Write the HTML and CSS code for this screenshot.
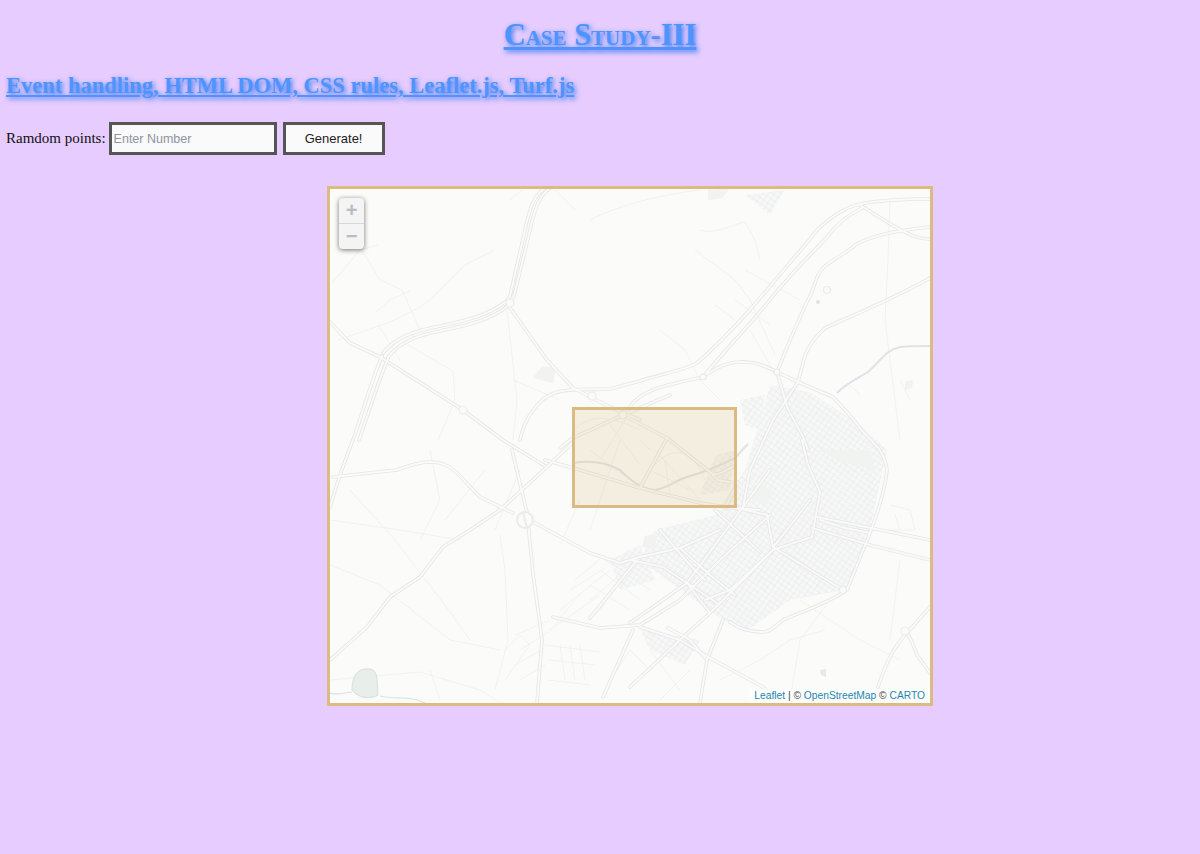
FILE: index.html
```html
<!DOCTYPE html>
<html lang="en">
<head>
<meta charset="utf-8">
<title>Case Study-III</title>
<link rel="stylesheet" href="styles.css">
</head>
<body>
<h1 class="title">Case Study-III</h1>
<h2 class="subtitle">Event handling, HTML DOM, CSS rules, Leaflet.js, Turf.js</h2>
<div class="controls">
  <label class="label" for="num">Ramdom points:</label>
  <input class="num-input" id="num" type="text" placeholder="Enter Number">
  <button class="gen-btn" type="button">Generate!</button>
</div>
<div class="map">
  <svg class="tiles" viewBox="330 189 600 514" width="600" height="514" aria-hidden="true">
    <defs>
      <pattern id="blocks" width="5" height="5" patternUnits="userSpaceOnUse" patternTransform="rotate(35)">
        <rect width="5" height="5" fill="#f6f7f6"/>
        <path d="M0 0H5M0 0V5" stroke="#e6e8e8" stroke-width="1"/>
      </pattern>
      <g id="roads">
        <path d="M545 188C532 197 529 212 525 230L510 296L505 304"/>
        <path d="M550 188C538 197 534 212 530 230L514 296L508 304"/>
        <path d="M505 302C490 314 470 320 440 326C415 331 397 336 383 353"/>
        <path d="M508 306C490 320 470 325 440 331C420 335 402 340 388 357"/>
        <path d="M330 322L350 343L380 357L463 410L503 440L545 466"/>
        <path d="M382 356C370 385 362 415 353 440C345 460 335 490 330 507"/>
        <path d="M388 358C376 388 368 415 359 440"/>
        <path d="M508 305L547 360L573 388L610 407L640 420"/>
        <path d="M520 440C524 420 537 400 552 394C565 388 590 390 610 389L640 381C660 374 680 372 697 363C712 350 730 332 747 313L773 283C790 262 805 246 817 230C830 218 843 208 860 204C880 200 905 199 930 199"/>
        <path d="M630 407C640 390 665 385 703 377C725 350 750 325 773 296C790 275 815 250 828 236C838 222 850 214 862 208"/>
        <path d="M703 377C715 368 728 362 740 362C755 361 765 366 777 372L798 382L833 397C845 410 855 420 863 432C875 445 884 450 887 470C885 490 878 512 870 533L847 590C825 605 805 610 783 620C773 628 770 632 763 632C750 632 738 628 730 622"/>
        <path d="M777 372C790 340 800 315 812 292C816 280 818 272 825 266C835 258 848 252 855 245C870 236 900 230 930 227"/>
        <path d="M860 205C875 214 885 222 905 232C915 238 922 239 930 239"/>
        <path d="M930 278C895 298 860 312 825 328C812 340 805 352 803 363L798 382"/>
        <path d="M777 372L787 407L803 437L808 450"/>
        <path d="M798 382L773 420L750 470L743 507"/>
        <path d="M333 477L397 470C410 465 420 462 430 462C445 462 452 468 460 476L480 497L513 513"/>
        <path d="M330 660L367 627L390 597L420 577L443 547L470 530L500 510L547 467L572 443"/>
        <path d="M512 450L527 513L533 573L542 640L537 703"/>
        <path d="M533 522L590 553L620 563L640 557L680 548L720 530"/>
        <path d="M553 617L600 628L640 625L680 600L720 560L770 515"/>
        <path d="M637 560L590 618"/>
        <path d="M633 630L603 697"/>
        <path d="M737 508L767 515L773 547L843 590"/>
        <path d="M817 517L930 540"/>
        <path d="M812 528L870 545L930 560"/>
        <path d="M802 440L808 465L820 492L812 537L773 550L723 600L710 613"/>
        <path d="M770 470L743 507L687 583L630 623"/>
        <path d="M687 583L710 613L680 640L630 687"/>
        <path d="M723 620L707 660L700 703"/>
        <path d="M630 560L663 567L717 603"/>
        <path d="M640 627L680 640L710 658L763 687L775 698"/>
        <path d="M773 550L730 590L705 600"/>
        <path d="M810 500L787 530L773 547"/>
        <path d="M760 552L715 510"/>
        <path d="M680 548L710 575L735 595"/>
        <path d="M660 530L690 565L705 580"/>
        <path d="M870 533L845 528L820 520"/>
        <path d="M878 687C885 665 895 645 907 633L930 607"/>
        <path d="M907 633C912 640 915 650 917 655L930 673"/>
        <path d="M707 660L690 640L668 628"/>
        <path d="M573 438L623 415L670 395"/>
        <path d="M560 448L573 438"/>
        <path d="M623 415L667 438L710 472C716 478 725 470 733 467"/>
        <path d="M667 438L640 488"/>
        <path d="M545 460L573 468L640 488L700 503L733 508L760 510"/>
        <path d="M710 472L718 480L735 483"/>
        <path d="M738 482L725 508"/>
      </g>
    </defs>
    <rect class="land" x="330" y="189" width="600" height="514"/>

    <g class="thin">
      <path d="M332 283L360 250L378 245M362 250L380 280L402 290M338 340C365 330 400 322 430 300L465 265L495 250"/>
      <path d="M376 312L390 300L410 291M378 325L400 360M402 290L420 330M408 345L453 371L455 400L438 440"/>
      <path d="M507 310L517 400L513 440M513 380L560 400"/>
      <path d="M510 200L522 190M555 190L575 210M590 220C610 210 640 198 700 190"/>
      <path d="M700 230C715 235 730 225 745 222L755 240L760 260M695 250L735 280L750 300L775 355M745 270L800 300"/>
      <path d="M660 330L685 350L700 380L720 400M750 330L790 400M715 305L735 320M735 300L770 325"/>
      <path d="M890 200L888 260L885 320L895 400L900 440"/>
      <path d="M850 385L860 395M900 380L910 400"/>
      <path d="M350 490L395 540L445 605L470 640M330 520L400 530L460 540M330 565L380 585L450 640L500 650"/>
      <path d="M430 450L440 500L420 540M485 470L445 520M500 535L505 570L508 640L495 690M520 470L495 530"/>
      <path d="M330 680L420 672L480 690L500 702M440 700L430 670"/>
      <path d="M580 500L560 545M600 500L590 530M620 440L600 500"/>
      <path d="M505 650L520 635L530 645L505 680M545 645L600 652M560 645L565 680M570 645L575 680M580 645L585 680M548 660L595 665M548 680L590 685"/>
      <path d="M575 580L605 555M570 590L605 568M560 610L610 570M555 625L575 600M590 600L620 575M550 630L600 595"/>
      <path d="M600 570L640 600M590 585L630 610M605 560L650 590M620 580L600 610"/>
      <path d="M515 635L550 620M520 650L548 632M515 665L545 648M520 680L545 665"/>
      <path d="M610 680L630 650L650 670M650 650L680 690M660 700L690 670"/>
      <path d="M900 560L890 640M825 630L790 640L760 660L720 680M800 600L860 640L900 660"/>
      <path d="M890 505L910 510L915 530L885 530M895 515L900 530"/>
      <path d="M790 700L800 640L830 600"/>
      <path d="M575 430C590 410 620 420 640 430M610 425L640 465M625 420L600 460M590 450L630 480M640 440L650 450"/>
      <path d="M640 488C660 445 690 440 705 480M650 470L690 490M655 450L700 500M665 460L670 495"/>
    </g>

    <g class="city">
      <path d="M770 385L810 392L860 425L887 450L870 530L845 590L790 600L745 632L715 615L680 590L640 560L655 530L715 515L745 470L760 420Z"/>
      <path d="M610 560L640 545L655 580L620 590Z"/>
      <path d="M640 630L700 640L685 665L650 650Z"/>
      <path d="M745 195L785 190L770 215Z"/>
      <path d="M716 455L735 450L730 490L700 495Z"/>
      <path d="M740 400L765 395L760 430L745 425Z"/>
    </g>

    <g class="parks">
      <path d="M542 366L556 368L553 383L533 378Z"/>
      <path d="M708 190L730 188L722 198L708 200Z"/>
      <path d="M752 487L772 488L767 505L752 500Z"/>
      <path d="M645 536L655 534L656 548L642 547Z"/>
      <path d="M905 382L913 380L912 388L905 390Z"/>
      <path d="M820 450L870 450L875 470L840 462Z"/>
    </g>

    <path class="pond" d="M352 690C352 675 358 668 370 669C378 670 377 680 378 695C370 700 358 698 352 690Z"/>
    <path class="river-thin" d="M330 693C340 696 345 692 352 692M380 696C395 700 410 695 425 703"/>
    <path class="river" d="M837 393C845 384 855 380 868 372C880 362 885 350 900 347C910 346 920 346 930 346"/>
    <path class="river" d="M573 463C590 460 605 462 620 470C630 480 640 488 655 490C668 488 675 480 690 476C705 472 715 468 735 458C742 450 745 447 748 444"/>

    <use href="#roads" class="road-case"/>
    <use href="#roads" class="road-fill"/>

    <g class="rings">
      <circle cx="525" cy="520" r="8"/>
      <path d="M523 512L527 528"/>
      <circle cx="827" cy="290" r="3.5" class="small"/>
      <circle cx="777" cy="372" r="3" class="small"/>
      <circle cx="703" cy="377" r="3" class="small"/>
      <circle cx="905" cy="631" r="4" class="small"/>
      <circle cx="463" cy="410" r="4" class="small"/>
      <circle cx="510" cy="303" r="4" class="small"/>
      <circle cx="623" cy="415" r="4" class="small"/>
      <circle cx="843" cy="590" r="3.5" class="small"/>
      <circle cx="592" cy="396" r="4" class="small"/>
    </g>
    <circle class="speck" cx="818" cy="302" r="2"/>
    <path class="speck-soft" d="M820 670L826 669L826 677L821 675Z"/>

    <rect class="area" x="573.5" y="408.5" width="162" height="98"/>
  </svg>

  <div class="zoom">
    <span class="zoom-btn">+</span>
    <span class="zoom-btn">&#8722;</span>
  </div>
  <div class="attrib"><a class="attrib-link">Leaflet</a> | © <a class="attrib-link">OpenStreetMap</a> © <a class="attrib-link">CARTO</a></div>
</div>
</body>
</html>
```

FILE: styles.css
```css
html, body {
  margin: 0;
  padding: 0;
}
body {
  background: #e6ccff;
  font-family: "Liberation Serif", serif;
  color: #111;
  height: 854px;
  overflow: hidden;
}
.title, .subtitle {
  color: #4d94ff;
  text-decoration: underline;
  text-shadow: 2px 2px 5px #3377ee;
  font-weight: bold;
}
.title {
  font-size: 30.5px;
  font-variant: small-caps;
  text-align: center;
  margin: 17px 0 0;
  line-height: 37px;
}
.subtitle {
  font-size: 22.5px;
  margin: 18px 0 0 6px;
  line-height: 27px;
}
.controls {
  display: flex;
  align-items: center;
  gap: 6px;
  margin: 23px 0 0 6px;
  height: 33px;
  font-size: 15px;
}
.label {
  margin-right: -3px;
}
.num-input, .gen-btn {
  box-sizing: border-box;
  height: 33px;
  border: 3px solid #555;
  background: #fafafa;
  font-family: "Liberation Sans", sans-serif;
  border-radius: 0;
  outline: none;
  padding: 0;
}
.num-input {
  width: 168px;
  padding-left: 2px;
  font-size: 12.5px;
}
.num-input::placeholder {
  color: #8f93a3;
  opacity: 1;
}
.gen-btn {
  width: 102px;
  font-size: 13px;
  color: #222;
}
.map {
  position: relative;
  width: 600px;
  height: 514px;
  margin: 31px 0 0 327px;
  border: 3px solid #dcbb82;
  background: #fbfbfa;
  overflow: hidden;
}
.tiles {
  display: block;
}
.land {
  fill: #fbfbfa;
}
.road-case, .road-fill {
  fill: none;
  stroke-linecap: round;
  stroke-linejoin: round;
}
.road-case {
  stroke: #e6e6e6;
  stroke-width: 3.6;
}
.road-fill {
  stroke: #fafafa;
  stroke-width: 2;
}
.thin {
  fill: none;
  stroke: #efefec;
  stroke-width: 0.8;
}
.city {
  fill: url(#blocks);
}
.parks {
  fill: #f0f3f0;
}
.pond {
  fill: #e8eeea;
  stroke: #d3dfe2;
  stroke-width: 1;
}
.river-thin {
  fill: none;
  stroke: #d8e2e6;
  stroke-width: 1.2;
}
.river {
  fill: none;
  stroke: #dfe2e8;
  stroke-width: 2;
}
.rings {
  fill: #fbfbfa;
  stroke: #ebebeb;
  stroke-width: 2;
}
.rings .small {
  stroke-width: 1.2;
}
.speck {
  fill: #dfe1e2;
}
.speck-soft {
  fill: #e6eaec;
}
.area {
  fill: #dcc183;
  fill-opacity: 0.22;
  stroke: #dcbb82;
  stroke-width: 3;
}
.zoom {
  position: absolute;
  top: 9px;
  left: 9px;
  width: 25px;
  display: flex;
  flex-direction: column;
  background: #f4f4f4;
  border-radius: 4px;
  box-shadow: 0 1px 5px rgba(0, 0, 0, 0.55);
}
.zoom-btn {
  height: 25px;
  line-height: 25px;
  text-align: center;
  font-family: "Liberation Sans", sans-serif;
  font-weight: bold;
  font-size: 20px;
  color: #b9bcc0;
}
.zoom-btn:first-child {
  border-bottom: 1px solid #d8d8d8;
}
.attrib {
  position: absolute;
  right: 0;
  bottom: 0;
  padding: 0 5px;
  background: rgba(255, 255, 255, 0.7);
  font-family: "Liberation Sans", sans-serif;
  font-size: 10.25px;
  line-height: 14px;
  color: #444;
}
.attrib-link {
  color: #1f86ad;
}
```
